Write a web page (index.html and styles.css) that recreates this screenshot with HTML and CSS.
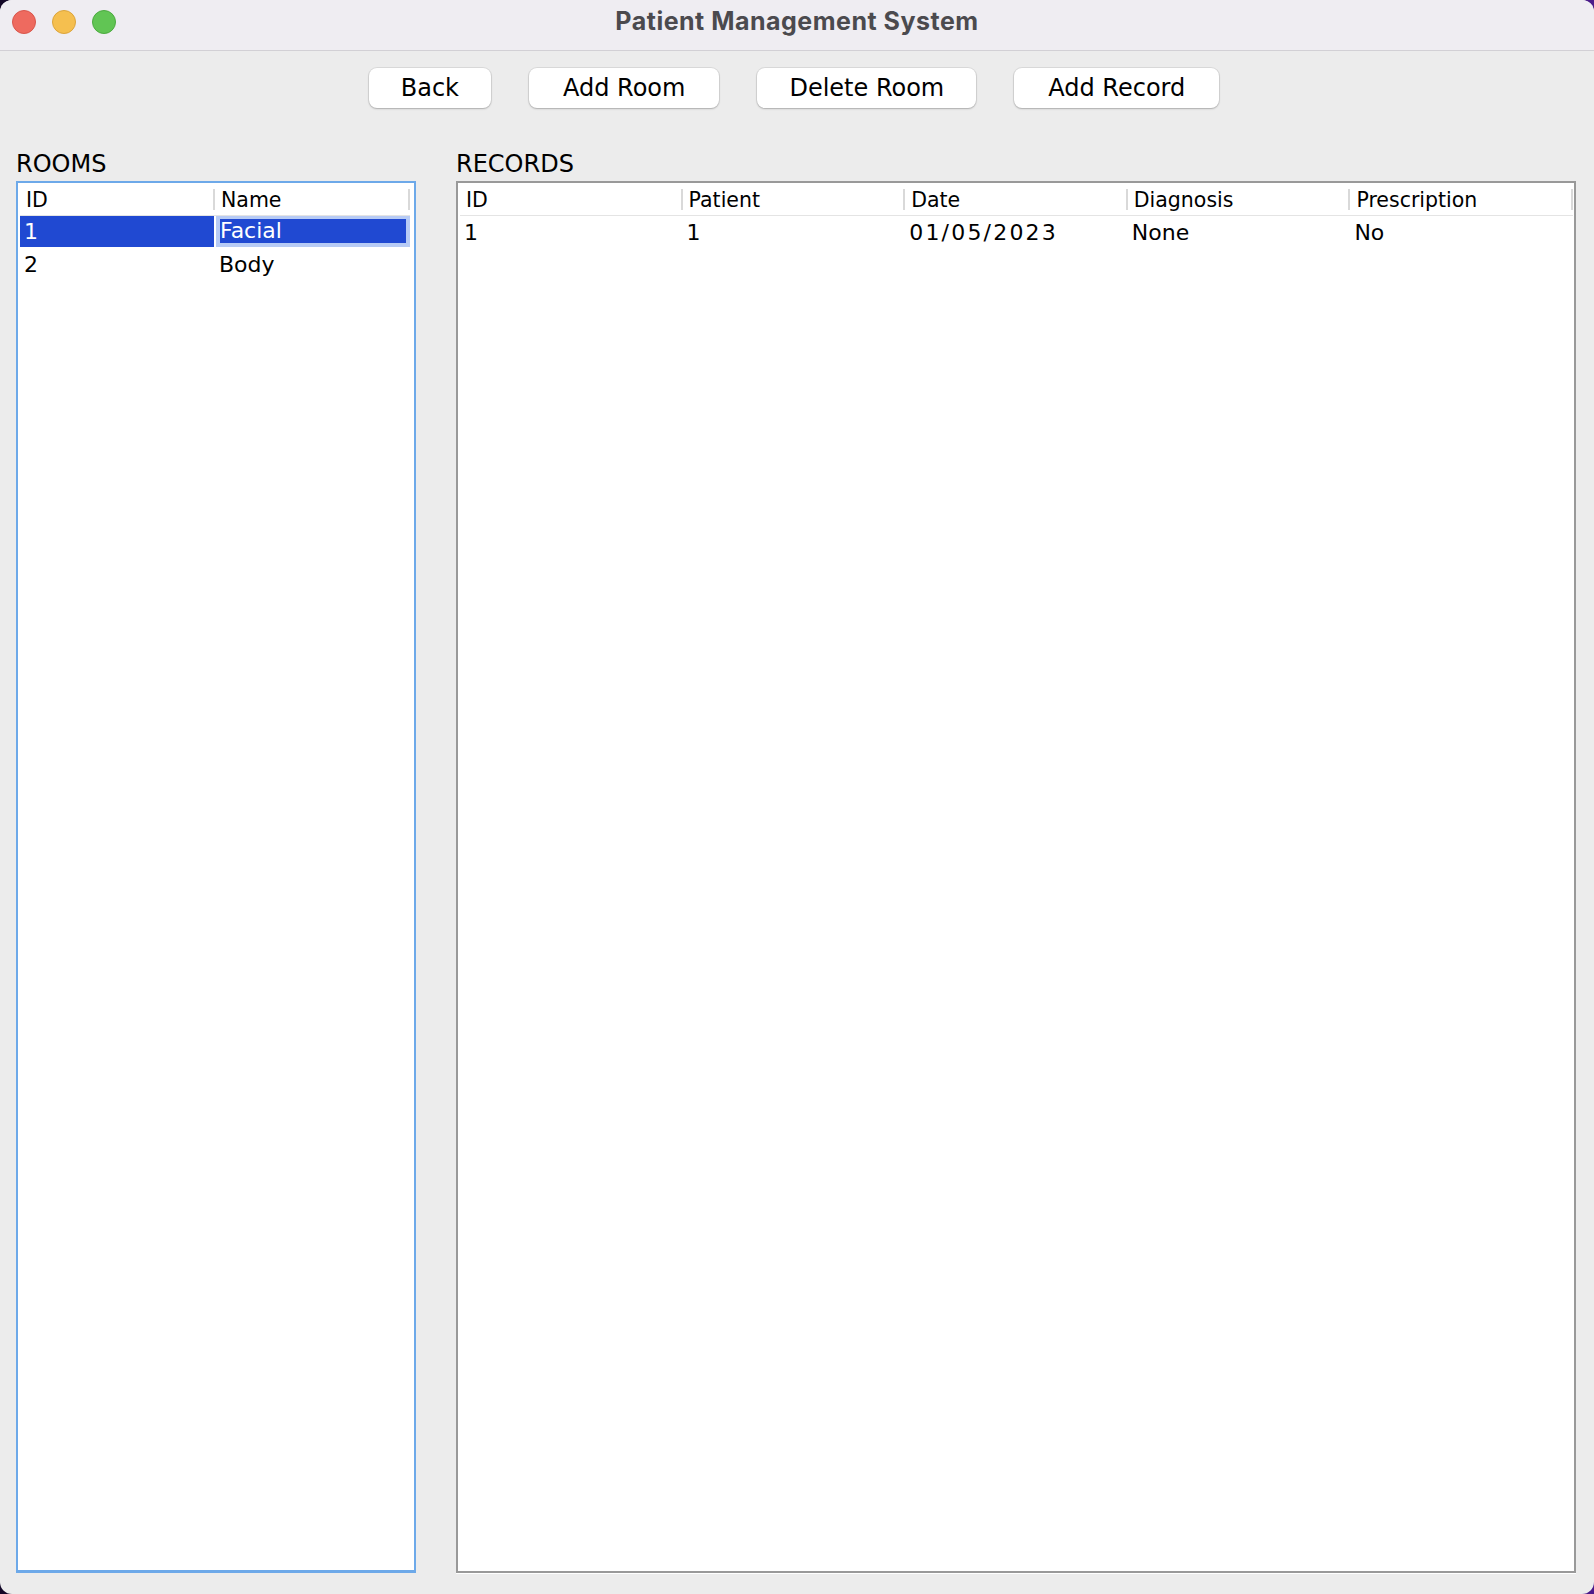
FILE: index.html
```html
<!DOCTYPE html>
<html>
<head>
<meta charset="utf-8">
<title>Patient Management System</title>
<link rel="stylesheet" href="styles.css">
</head>
<body>
<div class="window">
  <div class="titlebar">
    <div class="lights">
      <span class="light red"></span>
      <span class="light yellow"></span>
      <span class="light green"></span>
    </div>
    <div class="title">Patient Management System</div>
    <div class="spacer"></div>
  </div>
  <div class="toolbar">
    <button class="btn">Back</button>
    <button class="btn wide">Add Room</button>
    <button class="btn">Delete Room</button>
    <button class="btn wide">Add Record</button>
  </div>
  <div class="main">
    <section class="panel">
      <div class="label">ROOMS</div>
      <div class="scroll rooms">
        <div class="table cols-2">
          <div class="head">
            <div class="hcell">ID</div>
            <div class="hcell">Name</div>
          </div>
          <div class="row">
            <div class="cell sel-id">1</div>
            <div class="cell sel-focus"><span class="focus-inner">Facial</span></div>
          </div>
          <div class="row">
            <div class="cell">2</div>
            <div class="cell">Body</div>
          </div>
        </div>
      </div>
    </section>
    <section class="panel">
      <div class="label">RECORDS</div>
      <div class="scroll records">
        <div class="table cols-5">
          <div class="head">
            <div class="hcell">ID</div>
            <div class="hcell">Patient</div>
            <div class="hcell">Date</div>
            <div class="hcell">Diagnosis</div>
            <div class="hcell">Prescription</div>
          </div>
          <div class="row">
            <div class="cell">1</div>
            <div class="cell">1</div>
            <div class="cell date">01/05/2023</div>
            <div class="cell">None</div>
            <div class="cell">No</div>
          </div>
        </div>
      </div>
    </section>
  </div>
</div>
</body>
</html>
```

FILE: styles.css
```css
* { box-sizing: border-box; }

html, body {
  margin: 0;
  padding: 0;
}

body {
  width: 1594px;
  height: 1594px;
  background: linear-gradient(90deg, #140828, #4a1a8a);
  font-family: "DejaVu Sans", "Liberation Sans", sans-serif;
  color: #000;
  overflow: hidden;
}

.window {
  width: 1594px;
  height: 1594px;
  border-radius: 12px;
  overflow: hidden;
  background: #ececec;
  display: flex;
  flex-direction: column;
}

.titlebar {
  height: 51px;
  flex: none;
  background: #efedf2;
  border-bottom: 1px solid #d2d0d5;
  display: grid;
  grid-template-columns: 1fr auto 1fr;
  align-items: start;
}

.lights {
  display: flex;
  gap: 16px;
  padding: 10px 0 0 12px;
}

.light {
  width: 24px;
  height: 24px;
  border-radius: 50%;
  display: block;
}

.red { background: #ee6a5f; border: 1px solid #d8564c; }
.yellow { background: #f5bf4f; border: 1px solid #dba43c; }
.green { background: #61c554; border: 1px solid #4caa40; }

.title {
  font-family: "Inter", "Liberation Sans", sans-serif;
  font-weight: 700;
  font-size: 25px;
  line-height: 42px;
  color: #4b4a4e;
  letter-spacing: 0.5px;
}

.toolbar {
  flex: none;
  display: flex;
  justify-content: center;
  gap: 38px;
  padding-top: 17px;
  padding-right: 6px;
}

.btn {
  height: 40px;
  padding: 0 32px;
  border: none;
  border-radius: 8px;
  background: #fff;
  box-shadow: 0 0 0 1px rgba(0, 0, 0, 0.07), 0 1px 2px rgba(0, 0, 0, 0.22);
  font-family: "DejaVu Sans", sans-serif;
  font-size: 24px;
  color: #000;
}

.btn.wide { padding: 0 34px; }

.main {
  flex: 1;
  display: grid;
  grid-template-columns: 400px 1120px;
  column-gap: 40px;
  padding: 32px 18px 21px 16px;
  min-height: 0;
}

.panel {
  display: flex;
  flex-direction: column;
  min-height: 0;
}

.label {
  height: 41px;
  padding-top: 9px;
  font-size: 24px;
  line-height: 30px;
}

.scroll {
  flex: 1;
  background: #fff;
}

.rooms {
  border: 2px solid #6da9e9;
  border-bottom-width: 3px;
  padding: 0 2px 0 2px;
}

.records {
  border: 2px solid #999;
  padding: 0 1px 0 2px;
  box-shadow: 0 1px 0 #fff;
}

.table {
  display: flex;
  flex-direction: column;
}

.head, .row {
  display: grid;
}

.cols-2 .head, .cols-2 .row { grid-template-columns: repeat(2, 1fr); }
.rooms .table { margin-right: 2px; }
.cols-5 .head, .cols-5 .row { grid-template-columns: repeat(5, 1fr); }

.head {
  height: 33px;
  border-bottom: 1px solid #e4e4e4;
}

.hcell {
  font-size: 20.5px;
  line-height: 34px;
  padding-left: 6px;
  background: linear-gradient(#d9d9d9, #d9d9d9) right 0 top 6px / 2px 21px no-repeat;
}

.row {
  height: 32px;
}

.cell {
  font-size: 22px;
  line-height: 33px;
  padding-left: 4px;
  white-space: nowrap;
}

.date { letter-spacing: 2.2px; }

.sel-id {
  background: #2049d2;
  color: #fff;
  margin-right: 1px;
  height: 31px;
  line-height: 31px;
}

.sel-focus {
  margin-left: 1px;
  height: 31px;
  padding: 3px 4px 4px 4px;
  background: #b7cbf5;
  line-height: 24px;
}

.focus-inner {
  display: block;
  height: 24px;
  background: #2049d2;
  color: #fff;
}
```
